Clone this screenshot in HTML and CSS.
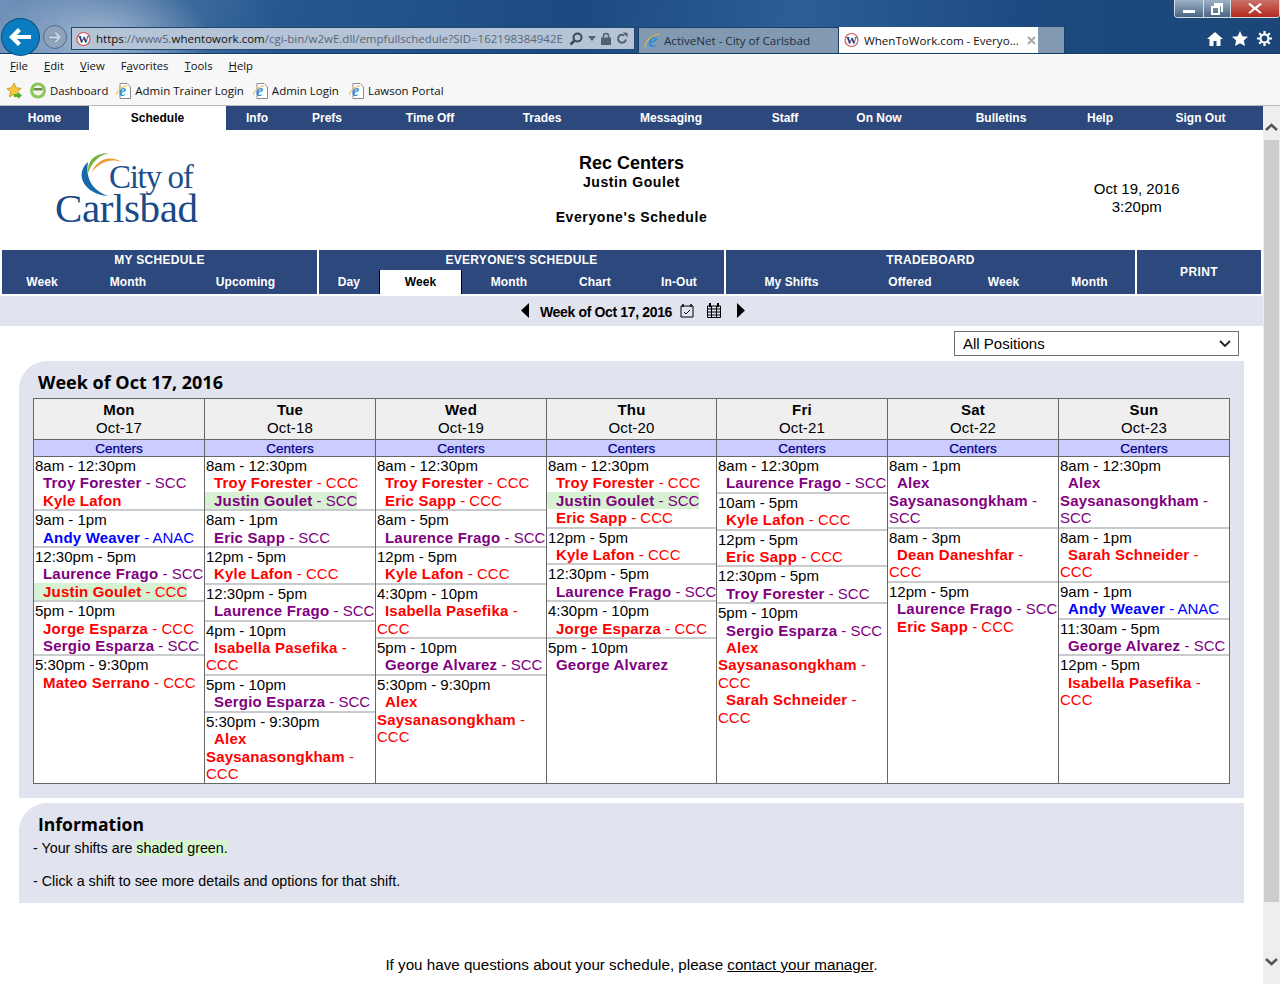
FILE: index.html
```html
<!DOCTYPE html>
<html lang="en">
<head>
<meta charset="utf-8">
<title>WhenToWork.com - Everyone's Schedule</title>
<link rel="stylesheet" href="styles.css">
</head>
<body>
<header class="chrome">
  <div class="winrow">
    <div class="winbtns">
      <span class="wb wb-min"><svg width="14" height="10" viewBox="0 0 14 10"><rect x="1" y="6" width="12" height="3" fill="#fff"/></svg></span>
      <span class="wb wb-max"><svg width="12" height="12" viewBox="0 0 12 12"><path d="M3 0h9v9h-2V3H3z M0 3h9v9H0z M2 5v5h5V5z" fill="#fff" fill-rule="evenodd"/></svg></span>
      <span class="wb wb-close"><svg width="14" height="11" viewBox="0 0 14 11"><path d="M2 0l5 4 5-4 2 1-5 4.500 5 4.500-2 0.500-5-4-5 4-2-0.500 5-4.500-5-4.500z" fill="#fff"/></svg></span>
    </div>
  </div>
  <div class="navrow">
    <span class="back"><svg width="37" height="36" viewBox="0 0 37 36"><path d="M7 18l9-9 3 3-4 4h14v4H15l4 4-3 3z" fill="#fff"/></svg></span>
    <span class="fwd"><svg width="24" height="24" viewBox="0 0 24 24"><path d="M19 12l-6-6-2 2 3 3H5v3h9l-3 3 2 2z" fill="#cdd8e4" stroke="#5f7890" stroke-width=".6"/></svg></span>
    <div class="addr">
      <svg class="fav" width="15" height="16" viewBox="0 0 15 16"><circle cx="7.500" cy="8" r="6.500" fill="#fff" stroke="#d0555a" stroke-width="1.200"/><text x="7.500" y="12" class="w-mark">W</text></svg>
      <span class="url">https<span class="dim">://www5.</span>whentowork.com<span class="dim">/cgi-bin/w2wE.dll/empfullschedule?SID=162198384942E8</span></span>
      <span class="addr-tools">
        <svg width="14" height="14" viewBox="0 0 14 14"><circle cx="8.500" cy="5.500" r="4" fill="none" stroke="#3c4a58" stroke-width="2"/><path d="M5.500 8.500L1.500 12.500" stroke="#3c4a58" stroke-width="2.500"/></svg>
        <svg width="8" height="5" viewBox="0 0 8 5"><path d="M0 0h8L4 5z" fill="#53616f"/></svg>
        <svg width="10" height="13" viewBox="0 0 10 13"><path d="M2.500 6V4a2.500 2.500 0 0 1 5 0v2" fill="none" stroke="#53616f" stroke-width="1.500"/><rect y="5.500" width="10" height="7.500" fill="#53616f"/></svg>
        <svg width="12" height="13" viewBox="0 0 12 13"><path d="M10 7.500a4 4 0 1 1-1.500-4" fill="none" stroke="#53616f" stroke-width="2"/><path d="M7 0l4.500 1v4.500z" fill="#53616f"/></svg>
      </span>
    </div>
    <div class="tab tab-off">
      <svg class="ie" width="17" height="18" viewBox="0 0 17 18"><text x="8.500" y="15" class="ie-big">e</text><path d="M1.500 16C-.5 10 9 2 16 2" fill="none" stroke="#f0b030" stroke-width="1.200"/></svg>
      <span>ActiveNet - City of Carlsbad</span>
    </div>
    <div class="tab tab-on">
      <svg class="fav" width="15" height="16" viewBox="0 0 15 16"><circle cx="7.500" cy="8" r="6.500" fill="#fff" stroke="#d0555a" stroke-width="1.200"/><text x="7.500" y="12" class="w-mark">W</text></svg>
      <span class="tab-title">WhenToWork.com - Everyo...</span>
      <svg width="9" height="9" viewBox="0 0 9 9"><path d="M1 1l7 7M8 1L1 8" stroke="#a9a9a9" stroke-width="2"/></svg>
    </div>
    <div class="tab-new"></div>
    <div class="tools">
      <svg width="16" height="15" viewBox="0 0 16 15"><path d="M8 1L0 8h2.500v7h4v-5h3v5h4V8H16z" fill="#fff"/></svg>
      <svg width="16" height="15" viewBox="0 0 16 15"><path d="M8 0l2.400 5.200 5.600.6-4.200 3.800 1.200 5.400L8 12.200 3 15l1.200-5.400L0 5.800l5.600-.6z" fill="#fff"/></svg>
      <svg width="15" height="15" viewBox="0 0 15 15"><circle cx="7.500" cy="7.500" r="4" fill="none" stroke="#fff" stroke-width="2.200"/><path d="M7.500 0v3M7.500 12v3M0 7.500h3M12 7.500h3M2.200 2.200l2.100 2.100M10.700 10.700l2.100 2.100M12.800 2.200l-2.100 2.100M4.300 10.700l-2.100 2.100" stroke="#fff" stroke-width="2.200"/></svg>
    </div>
  </div>
</header>

<div class="bars">
  <nav class="menu">
    <span><u>F</u>ile</span><span><u>E</u>dit</span><span><u>V</u>iew</span><span>F<u>a</u>vorites</span><span><u>T</u>ools</span><span><u>H</u>elp</span>
  </nav>
  <div class="favbar">
    <svg class="fb-star" width="17" height="17" viewBox="0 0 17 17"><path d="M8 1l2.200 4.800 5 .6-3.700 3.400 1 5L8 12.300 3.500 14.800l1-5L.8 6.400l5-.6z" fill="#f6c83c" stroke="#c08a20" stroke-width=".8"/><path d="M8 12h4v-2l4 3.500-4 3.500v-2H8z" fill="#4caf2f"/></svg>
    <svg class="fb-dash" width="16" height="17" viewBox="0 0 16 17"><circle cx="8" cy="8.500" r="8" fill="#8cc65a"/><circle cx="8" cy="8.500" r="5" fill="#f1f6e8"/><rect x="3.500" y="6" width="9" height="2.500" fill="#6c8a50"/></svg>
    <span class="fb-text fb-t1">Dashboard</span>
    <svg class="fb-ie" width="15" height="16" viewBox="0 0 15 16"><path d="M4 .5h7l3.500 3.500v11.500H4z" fill="#fff" stroke="#8a8a8a"/><text x="6.500" y="13" class="ie-e">e</text><path d="M.5 12C.5 8 6 3 11 3" fill="none" stroke="#f0b030"/></svg>
    <span class="fb-text fb-t2">Admin Trainer Login</span>
    <svg class="fb-ie" width="15" height="16" viewBox="0 0 15 16"><path d="M4 .5h7l3.500 3.500v11.500H4z" fill="#fff" stroke="#8a8a8a"/><text x="6.500" y="13" class="ie-e">e</text><path d="M.5 12C.5 8 6 3 11 3" fill="none" stroke="#f0b030"/></svg>
    <span class="fb-text fb-t3">Admin Login</span>
    <svg class="fb-ie" width="15" height="16" viewBox="0 0 15 16"><path d="M4 .5h7l3.500 3.500v11.500H4z" fill="#fff" stroke="#8a8a8a"/><text x="6.500" y="13" class="ie-e">e</text><path d="M.5 12C.5 8 6 3 11 3" fill="none" stroke="#f0b030"/></svg>
    <span class="fb-text fb-t4">Lawson Portal</span>
  </div>
</div>

<div class="viewport">
  <main class="page">
    <nav class="mainnav">
      <a>Home</a><a class="on">Schedule</a><a>Info</a><a>Prefs</a><a>Time Off</a><a>Trades</a><a>Messaging</a><a>Staff</a><a>On Now</a><a>Bulletins</a><a>Help</a><a>Sign Out</a>
    </nav>

    <section class="head">
      <svg class="logo" width="150" height="86" viewBox="0 0 150 86">
        <path d="M36 12C22 24 32 44 56 46 42 41 33 30 36 12z" fill="#1769ae"/>
        <path d="M36 23C35 11 42 3 57 3 47 5 40 12 36 23z" fill="#7ab13c"/>
        <path d="M40 22C44 11 56 4 70 12 58 8 48 12 40 22z" fill="#f29b2e"/>
        <text x="57" y="38" class="logo-a">City of</text>
        <text x="3" y="72" class="logo-b">Carlsbad</text>
      </svg>
      <div class="titles">
        <div class="t-org">Rec Centers</div>
        <div class="t-name">Justin Goulet</div>
        <div class="t-view">Everyone's Schedule</div>
      </div>
      <div class="stamp">Oct 19, 2016<br>3:20pm</div>
    </section>

    <div class="tabs">
      <div class="group g1">
        <div class="g-title">MY SCHEDULE</div>
        <div class="g-row"><a class="c-a">Week</a><a class="c-b">Month</a><a class="c-c">Upcoming</a></div>
      </div>
      <div class="group g2">
        <div class="g-title">EVERYONE'S SCHEDULE</div>
        <div class="g-row"><a class="c-d">Day</a><a class="c-e on">Week</a><a class="c-f">Month</a><a class="c-g">Chart</a><a class="c-h">In-Out</a></div>
      </div>
      <div class="group g3">
        <div class="g-title">TRADEBOARD</div>
        <div class="g-row"><a class="c-i">My Shifts</a><a class="c-j">Offered</a><a class="c-k">Week</a><a class="c-l">Month</a></div>
      </div>
      <div class="group g4"><div class="g-print">PRINT</div></div>
    </div>

    <div class="weekbar">
      <svg width="8" height="15" viewBox="0 0 8 15"><path d="M8 0v15L0 7.500z" fill="#000"/></svg>
      <strong>Week of Oct 17, 2016</strong>
      <svg width="14" height="15" viewBox="0 0 14 15"><path d="M1 3h12v11H1z" fill="none" stroke="#000"/><path d="M3 1v3M11 1v3" stroke="#000" stroke-width="1.500"/><path d="M4 9l2 2 4-4" fill="none" stroke="#000"/></svg>
      <svg class="cal2" width="14" height="15" viewBox="0 0 14 15"><path d="M.5 3h13v11.500H.5zM.5 6h13M.5 9h13M.5 12h13M4.500 3v11.500M9.500 3v11.500" fill="none" stroke="#000"/><path d="M3 0v4M11 0v4" stroke="#000" stroke-width="2"/></svg>
      <svg class="next" width="8" height="15" viewBox="0 0 8 15"><path d="M0 0v15l8-7.500z" fill="#000"/></svg>
    </div>

    <div class="filter">
      <div class="select"><span>All Positions</span><svg width="12" height="7" viewBox="0 0 12 7"><path d="M1 1l5 5 5-5" fill="none" stroke="#222" stroke-width="1.800"/></svg></div>
    </div>

    <section class="panel">
      <h2>Week of Oct 17, 2016</h2>
      <table class="sched">
        <colgroup><col class="w171"><col class="w171"><col class="w171"><col class="w170"><col class="w171"><col class="w171"><col class="w171"></colgroup>
        <thead>
          <tr class="days">
            <th><b>Mon</b><br>Oct-17</th><th><b>Tue</b><br>Oct-18</th><th><b>Wed</b><br>Oct-19</th><th><b>Thu</b><br>Oct-20</th><th><b>Fri</b><br>Oct-21</th><th><b>Sat</b><br>Oct-22</th><th><b>Sun</b><br>Oct-23</th>
          </tr>
          <tr class="cat">
            <th>Centers</th><th>Centers</th><th>Centers</th><th>Centers</th><th>Centers</th><th>Centers</th><th>Centers</th>
          </tr>
        </thead>
        <tbody>
          <tr>
            <td>
              <div class="shift"><div class="when">8am - 12:30pm</div>
                <div class="who scc"><span><b>Troy Forester</b> - SCC</span></div>
                <div class="who ccc"><span><b>Kyle Lafon</b></span></div></div>
              <div class="shift"><div class="when">9am - 1pm</div>
                <div class="who anac"><span><b>Andy Weaver</b> - ANAC</span></div></div>
              <div class="shift"><div class="when">12:30pm - 5pm</div>
                <div class="who scc"><span><b>Laurence Frago</b> - SCC</span></div>
                <div class="who ccc mine"><span><b>Justin Goulet</b> - CCC</span></div></div>
              <div class="shift"><div class="when">5pm - 10pm</div>
                <div class="who ccc"><span><b>Jorge Esparza</b> - CCC</span></div>
                <div class="who scc"><span><b>Sergio Esparza</b> - SCC</span></div></div>
              <div class="shift last"><div class="when">5:30pm - 9:30pm</div>
                <div class="who ccc"><span><b>Mateo Serrano</b> - CCC</span></div></div>
            </td>
            <td>
              <div class="shift"><div class="when">8am - 12:30pm</div>
                <div class="who ccc"><span><b>Troy Forester</b> - CCC</span></div>
                <div class="who scc mine"><span><b>Justin Goulet</b> - SCC</span></div></div>
              <div class="shift"><div class="when">8am - 1pm</div>
                <div class="who scc"><span><b>Eric Sapp</b> - SCC</span></div></div>
              <div class="shift"><div class="when">12pm - 5pm</div>
                <div class="who ccc"><span><b>Kyle Lafon</b> - CCC</span></div></div>
              <div class="shift"><div class="when">12:30pm - 5pm</div>
                <div class="who scc"><span><b>Laurence Frago</b> - SCC</span></div></div>
              <div class="shift"><div class="when">4pm - 10pm</div>
                <div class="who ccc"><span><b>Isabella Pasefika</b> -<br>CCC</span></div></div>
              <div class="shift"><div class="when">5pm - 10pm</div>
                <div class="who scc"><span><b>Sergio Esparza</b> - SCC</span></div></div>
              <div class="shift last"><div class="when">5:30pm - 9:30pm</div>
                <div class="who ccc"><span><b>Alex<br>Saysanasongkham</b> -<br>CCC</span></div></div>
            </td>
            <td>
              <div class="shift"><div class="when">8am - 12:30pm</div>
                <div class="who ccc"><span><b>Troy Forester</b> - CCC</span></div>
                <div class="who ccc"><span><b>Eric Sapp</b> - CCC</span></div></div>
              <div class="shift"><div class="when">8am - 5pm</div>
                <div class="who scc"><span><b>Laurence Frago</b> - SCC</span></div></div>
              <div class="shift"><div class="when">12pm - 5pm</div>
                <div class="who ccc"><span><b>Kyle Lafon</b> - CCC</span></div></div>
              <div class="shift"><div class="when">4:30pm - 10pm</div>
                <div class="who ccc"><span><b>Isabella Pasefika</b> -<br>CCC</span></div></div>
              <div class="shift"><div class="when">5pm - 10pm</div>
                <div class="who scc"><span><b>George Alvarez</b> - SCC</span></div></div>
              <div class="shift last"><div class="when">5:30pm - 9:30pm</div>
                <div class="who ccc"><span><b>Alex<br>Saysanasongkham</b> -<br>CCC</span></div></div>
            </td>
            <td>
              <div class="shift"><div class="when">8am - 12:30pm</div>
                <div class="who ccc"><span><b>Troy Forester</b> - CCC</span></div>
                <div class="who scc mine"><span><b>Justin Goulet</b> - SCC</span></div>
                <div class="who ccc"><span><b>Eric Sapp</b> - CCC</span></div></div>
              <div class="shift"><div class="when">12pm - 5pm</div>
                <div class="who ccc"><span><b>Kyle Lafon</b> - CCC</span></div></div>
              <div class="shift"><div class="when">12:30pm - 5pm</div>
                <div class="who scc"><span><b>Laurence Frago</b> - SCC</span></div></div>
              <div class="shift"><div class="when">4:30pm - 10pm</div>
                <div class="who ccc"><span><b>Jorge Esparza</b> - CCC</span></div></div>
              <div class="shift last"><div class="when">5pm - 10pm</div>
                <div class="who scc"><span><b>George Alvarez</b></span></div></div>
            </td>
            <td>
              <div class="shift"><div class="when">8am - 12:30pm</div>
                <div class="who scc"><span><b>Laurence Frago</b> - SCC</span></div></div>
              <div class="shift"><div class="when">10am - 5pm</div>
                <div class="who ccc"><span><b>Kyle Lafon</b> - CCC</span></div></div>
              <div class="shift"><div class="when">12pm - 5pm</div>
                <div class="who ccc"><span><b>Eric Sapp</b> - CCC</span></div></div>
              <div class="shift"><div class="when">12:30pm - 5pm</div>
                <div class="who scc"><span><b>Troy Forester</b> - SCC</span></div></div>
              <div class="shift last"><div class="when">5pm - 10pm</div>
                <div class="who scc"><span><b>Sergio Esparza</b> - SCC</span></div>
                <div class="who ccc"><span><b>Alex<br>Saysanasongkham</b> -<br>CCC</span></div>
                <div class="who ccc"><span><b>Sarah Schneider</b> -<br>CCC</span></div></div>
            </td>
            <td>
              <div class="shift"><div class="when">8am - 1pm</div>
                <div class="who scc"><span><b>Alex<br>Saysanasongkham</b> -<br>SCC</span></div></div>
              <div class="shift"><div class="when">8am - 3pm</div>
                <div class="who ccc"><span><b>Dean Daneshfar</b> -<br>CCC</span></div></div>
              <div class="shift last"><div class="when">12pm - 5pm</div>
                <div class="who scc"><span><b>Laurence Frago</b> - SCC</span></div>
                <div class="who ccc"><span><b>Eric Sapp</b> - CCC</span></div></div>
            </td>
            <td>
              <div class="shift"><div class="when">8am - 12:30pm</div>
                <div class="who scc"><span><b>Alex<br>Saysanasongkham</b> -<br>SCC</span></div></div>
              <div class="shift"><div class="when">8am - 1pm</div>
                <div class="who ccc"><span><b>Sarah Schneider</b> -<br>CCC</span></div></div>
              <div class="shift"><div class="when">9am - 1pm</div>
                <div class="who anac"><span><b>Andy Weaver</b> - ANAC</span></div></div>
              <div class="shift"><div class="when">11:30am - 5pm</div>
                <div class="who scc"><span><b>George Alvarez</b> - SCC</span></div></div>
              <div class="shift last"><div class="when">12pm - 5pm</div>
                <div class="who ccc"><span><b>Isabella Pasefika</b> -<br>CCC</span></div></div>
            </td>
          </tr>
        </tbody>
      </table>
    </section>

    <section class="info">
      <h2>Information</h2>
      <p>- Your shifts are <span class="green">shaded green.</span></p>
      <p>- Click a shift to see more details and options for that shift.</p>
    </section>

    <p class="foot">If you have questions about your schedule, please <a>contact your manager</a>.</p>
  </main>

  <aside class="scrollbar">
    <svg width="13" height="8" viewBox="0 0 13 8"><path d="M1 7l5.500-5L12 7" fill="none" stroke="#555" stroke-width="2.500"/></svg>
    <div class="thumb"></div>
    <svg width="13" height="8" viewBox="0 0 13 8"><path d="M1 1l5.500 5L12 1" fill="none" stroke="#555" stroke-width="2.500"/></svg>
  </aside>
</div>
</body>
</html>
```

FILE: styles.css
```css
html, body { margin: 0; padding: 0; }
body { width: 1280px; height: 984px; overflow: hidden; background: #fff; color: #000; font-family: "Liberation Sans", Arial, sans-serif; }

/* browser chrome */
.chrome { height: 54px; background:
  radial-gradient(ellipse 110px 60px at 100px 40px, rgba(190,205,225,.75), rgba(190,205,225,0) 100%),
  linear-gradient(100deg, #6f90b8 0, #25588f 22%, #1c4a80 45%, #2c5f94 62%, #1c4a80 80%, #1b4677 100%);
  border-bottom: 1px solid #123a66; box-sizing: border-box; }
.winrow { height: 19px; display: flex; justify-content: flex-end; }
.winbtns { display: flex; width: 106px; height: 18px; box-sizing: border-box; border: 1px solid #d5dde6; border-top: 0; border-radius: 0 0 4px 4px; overflow: hidden; }
.wb { display: flex; align-items: center; justify-content: center; height: 17px; }
.wb-min, .wb-max { background: linear-gradient(#9fb3c8, #4a6480); width: 28px; }
.wb-max { border-left: 1px solid #d5dde6; border-right: 1px solid #d5dde6; width: 26px; }
.wb-close { flex: 1; background: linear-gradient(#c9726a, #b4271c); }
.navrow { display: flex; align-items: flex-start; height: 34px; }
.back { width: 37px; height: 36px; margin-left: 2px; border-radius: 50%; background: #0a7cc0; display: block; position: relative; z-index: 1; box-shadow: 0 0 0 1px #0c4a7c; }
.fwd { width: 24px; height: 24px; margin: 6px 0 0 4px; border-radius: 50%; background: #8ea4bb; border: 1px solid #4f6a86; box-sizing: border-box; display: flex; align-items: center; justify-content: center; }
.addr { width: 564px; height: 23px; margin: 8px 0 0 4px; box-sizing: border-box; background: #b5c4d6; border: 1px solid #22486f; display: flex; align-items: center; padding: 0 6px 0 4px; gap: 6px; }
.fav { flex: none; }
.w-mark { font: bold 11px "Liberation Serif", serif; fill: #1c3a78; text-anchor: middle; }
.url { font: 11.500px "Open Sans", sans-serif; color: #111; white-space: nowrap; overflow: hidden; width: 467px; flex: none; margin-left: -1px; }
.dim { color: #59677a; }
.addr-tools { display: flex; align-items: center; gap: 5px; }
.tab { height: 26px; margin-top: 8px; box-sizing: border-box; display: flex; align-items: center; font: 11.600px "Open Sans", sans-serif; white-space: nowrap; }
.tab-off { width: 201px; margin-left: 3px; padding-left: 5px; gap: 3px; background: #8299b2; border: 1px solid #1a3e66; border-bottom: 0; color: #20303f; }
.tab-on { width: 199px; padding-left: 5px; gap: 4px; background: #fff; color: #111; }
.tab-title { width: 159px; margin-left: 1px; }
.tab-new { width: 27px; height: 26px; margin-top: 8px; background: #8299b2; border-right: 1px solid #1a3e66; box-sizing: border-box; }
.tools { display: flex; gap: 9px; margin: 12px 0 0 142px; align-items: center; }
.ie-e { font: italic bold 16px "Liberation Serif", serif; fill: #2b8fd8; text-anchor: middle; }
.ie-big { font: italic bold 21px "Liberation Serif", serif; fill: #2b8fd8; text-anchor: middle; }

.bars { height: 52px; background: #f7f7f7; border-top: 1px solid #fff; box-sizing: border-box; border-bottom: 1px solid #bbb; font: 11.300px "Open Sans", sans-serif; color: #111; }
.menu { height: 21px; display: flex; align-items: center; padding: 0 0 0 10px; gap: 16px; box-sizing: border-box; }
.favbar { height: 25px; margin-top: 2px; display: flex; align-items: center; padding-left: 6px; }
.fb-dash { margin-left: 7px; }
.fb-text { margin-left: 4px; }
.fb-t1 { margin-right: 8px; }
.fb-t2 { margin-right: 9px; font-size: 11.500px; }
.fb-t3 { margin-right: 10px; font-size: 11.500px; }
.fb-t4 { font-size: 11.500px; }

.viewport { display: flex; height: 878px; }
.page { width: 1263px; flex: none; }

/* main nav */
.mainnav { display: grid; grid-template-columns: 89px 137px 62px 78px 128px 96px 162px 66px 122px 122px 76px 125px; height: 24px; background: #2c487c; }
.mainnav a { color: #fff; font-size: 12px; font-weight: bold; line-height: 24px; text-align: center; }
.mainnav a.on { background: #fff; color: #000; }

/* heading */
.head { height: 120px; position: relative; display: grid; grid-template-columns: 1fr 262px 1fr; }
.logo { position: absolute; left: 52px; top: 20px; }
.logo-a { font: 33px "Liberation Serif", serif; fill: #1a4f8c; letter-spacing: -1.300px; }
.logo-b { font: 41px "Liberation Serif", serif; fill: #174a86; letter-spacing: -.400px; }
.titles { grid-column: 2; text-align: center; font-weight: bold; font-size: 14px; letter-spacing: .6px; }
.t-org { font-size: 18px; letter-spacing: 0; padding-top: 23px; line-height: 20px; }
.t-name { line-height: 18px; }
.t-view { margin-top: 17px; line-height: 18px; }
.stamp { grid-column: 3; font-size: 15px; line-height: 18px; text-align: center; width: 100%; padding: 50px 0 0 248px; box-sizing: border-box; }

/* tab groups */
.tabs { display: grid; grid-template-columns: 315px 405px 409px 124px; column-gap: 2px; padding-left: 2px; height: 46px; align-items: start; }
.group { background: #2c487c; color: #fff; height: 44px; font-size: 12px; font-weight: bold; }
.g-title { height: 20px; line-height: 20px; text-align: center; letter-spacing: .3px; }
.g-row { display: grid; height: 24px; }
.g-row a { line-height: 24px; text-align: center; letter-spacing: .1px; }
.g-row a.on { background: #fff; color: #000; border-left: 1px solid #000; border-right: 1px solid #000; box-sizing: border-box; }
.g1 .g-row { grid-template-columns: 80px 92px 143px; }
.g2 .g-row { grid-template-columns: 60px 83px 94px 78px 90px; }
.g3 .g-row { grid-template-columns: 131px 106px 81px 91px; }
.g-print { text-align: center; line-height: 44px; letter-spacing: .4px; }

.weekbar { height: 30px; background: #e1e3ef; display: flex; align-items: center; padding: 0 0 2px 521px; box-sizing: border-box; }
.weekbar strong { font-size: 14px; margin: 3px 8px 0 11px; white-space: nowrap; letter-spacing: -.35px; }
.cal2 { margin-left: 13px; }
.next { margin-left: 16px; }
.filter { height: 35px; padding: 5px 0 0 954px; box-sizing: border-box; }
.select { width: 285px; height: 25px; box-sizing: border-box; border: 1px solid #707070; display: flex; align-items: center; justify-content: space-between; padding: 0 7px 0 8px; font-size: 15px; }

/* panels */
.panel { width: 1225px; margin-left: 19px; height: 437px; background: #e1e3ef; border-radius: 28px 0 0 0; padding-left: 14px; box-sizing: border-box; }
.panel h2, .info h2 { margin: 0; font: bold 18px "Open Sans", sans-serif; color: #000; padding-left: 5px; }
.panel h2 { height: 37px; line-height: 42px; }
.sched { border-collapse: collapse; table-layout: fixed; width: 1197px; background: #fff; font-size: 15px; line-height: 17.400px; }
.w171 { width: 171px; }
.w170 { width: 170px; }
.sched th, .sched td { border: 1px solid #666; padding: 0; }
.days th { height: 40px; background: #efefef; font-weight: normal; line-height: 18px; border-bottom: 0; vertical-align: middle; letter-spacing: .2px; }
.cat th { height: 15px; padding-top: 1px; background: #ccf; color: #00008b; font-size: 13.500px; font-weight: normal; -webkit-text-stroke: .25px #00008b; line-height: 15px; border-top: 1px solid #666; }
.sched td { height: 326px; vertical-align: top; padding-left: 1px; }
.shift { border-bottom: 2px solid #c8cccc; margin-left: -1px; padding-left: 1px; }
.shift.last { border-bottom: 0; }
.who { white-space: nowrap; }
.who span { padding-left: 8px; }
.who b { letter-spacing: .2px; }
.scc { color: #800080; }
.ccc { color: #f00; }
.anac { color: #00f; }
.mine span { background: #d6f2d2; margin-left: -1px; padding-left: 9px; }

.info { width: 1225px; margin: 5px 0 0 19px; height: 100px; background: #e1e3ef; border-radius: 28px 0 0 0; padding-left: 14px; box-sizing: border-box; font-size: 14.300px; }
.info h2 { font-size: 17.500px; line-height: 26px; padding-top: 8px; height: 26px; box-sizing: content-box; }
.info p { margin: 0; line-height: 17px; }
.info h2 + p { margin-top: 3px; margin-bottom: 16px; }
.green { background: #d8f5d0; }
.foot { margin: 53px 0 0; text-align: center; font-size: 15.200px; line-height: 18px; width: 1263px; }
.foot a { text-decoration: underline; }

.scrollbar { width: 17px; background: #eee; display: flex; flex-direction: column; align-items: center; }
.scrollbar svg { flex: none; margin-top: 17px; }
.thumb { width: 15px; height: 762px; background: #ccc; margin-top: 9px; }
.scrollbar svg:last-child { margin-top: 56px; }
```
